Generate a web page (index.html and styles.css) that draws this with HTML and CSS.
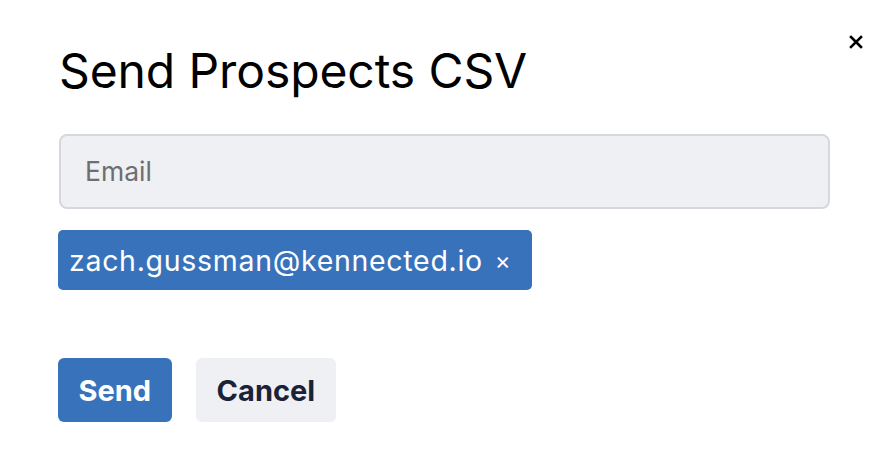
FILE: index.html
```html
<!DOCTYPE html>
<html>
<head>
<meta charset="utf-8">
<link rel="stylesheet" href="styles.css">
</head>
<body>
<div class="modal">
  <button class="close" aria-label="Close">
    <svg width="14" height="14" viewBox="0 0 14 14"><path d="M2 2L12 12M12 2L2 12" stroke="#000" stroke-width="2.6" stroke-linecap="square"/></svg>
  </button>
  <h1 class="title">Send Prospects CSV</h1>
  <div class="input">Email</div>
  <div class="tags">
    <span class="tag">zach.gussman@kennected.io<span class="tag-x">×</span></span>
  </div>
  <div class="actions">
    <button class="btn btn-primary">Send</button>
    <button class="btn btn-secondary">Cancel</button>
  </div>
</div>
</body>
</html>
```
FILE: styles.css
```css
html, body {
  margin: 0;
  padding: 0;
  background: #fff;
}
body {
  font-family: Inter, "Liberation Sans", sans-serif;
  width: 890px;
  height: 450px;
  overflow: hidden;
}
.modal {
  position: relative;
  padding: 38px 60px 0 58px;
}
.close {
  position: absolute;
  top: 34px;
  right: 26px;
  border: none;
  background: none;
  padding: 0;
  width: 16px;
  height: 16px;
  display: flex;
  align-items: center;
  justify-content: center;
}
.title {
  margin: 0 0 0 1px;
  font-size: 48px;
  font-weight: 400;
  line-height: 66px;
  color: #000;
  letter-spacing: -0.1px;
}
.input {
  margin-top: 30px;
  margin-left: 1px;
  height: 71px;
  border: 2px solid #d5d8de;
  border-radius: 8px;
  background: #eff0f4;
  box-sizing: content-box;
  padding: 0 24px;
  font-size: 26.5px;
  line-height: 71px;
  color: #6e6e72;
}
.tags {
  margin-top: 21px;
  display: flex;
}
.tag {
  display: inline-flex;
  align-items: center;
  background: #3872bb;
  color: #fff;
  border-radius: 5px;
  height: 60px;
  padding: 0 21px 0 11px;
  font-size: 28.5px;
  letter-spacing: 0.7px;
}
.tag-x {
  margin-left: 12px;
  font-size: 24px;
  letter-spacing: 0;
}
.actions {
  margin-top: 68px;
  display: flex;
  gap: 24px;
}
.btn {
  border: none;
  border-radius: 6px;
  height: 64px;
  font-family: Inter, "Liberation Sans", sans-serif;
  font-weight: 700;
  font-size: 29px;
  padding: 0 20.5px;
}
.btn-primary {
  background: #3872bb;
  color: #fff;
}
.btn-secondary {
  background: #eff0f4;
  color: #1a2238;
  padding: 0 21px;
}
```
